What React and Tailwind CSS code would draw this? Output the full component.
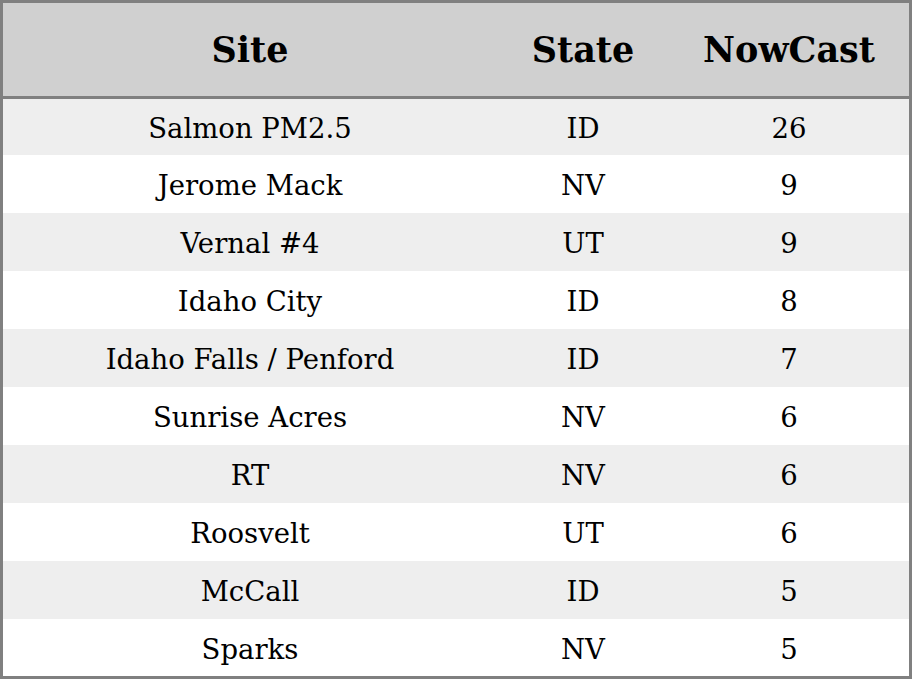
import React from 'react';

const rows = [
  ['Salmon PM2.5', 'ID', '26'],
  ['Jerome Mack', 'NV', '9'],
  ['Vernal #4', 'UT', '9'],
  ['Idaho City', 'ID', '8'],
  ['Idaho Falls / Penford', 'ID', '7'],
  ['Sunrise Acres', 'NV', '6'],
  ['RT', 'NV', '6'],
  ['Roosvelt', 'UT', '6'],
  ['McCall', 'ID', '5'],
  ['Sparks', 'NV', '5'],
];

export default function App() {
  return (
    <div className="w-[912px] h-[679px] overflow-hidden border-[3px] border-[#808080] bg-white text-black font-['DejaVu_Serif',serif]">
      {/* header */}
      <div className="grid grid-cols-[494px_172px_1fr] h-[96px] pt-[2px] bg-[#d0d0d0] border-b-[3px] border-[#808080] text-[35px] font-bold items-center text-center">
        <div>Site</div>
        <div>State</div>
        <div>NowCast</div>
      </div>

      {rows.map(([site, state, now], i) => (
        <div
          key={site}
          className={
            'grid grid-cols-[494px_172px_1fr] items-center text-center text-[27.5px] pt-[3px] ' +
            (i === 0 ? 'h-[56px] ' : 'h-[58px] ') +
            (i % 2 === 0 ? 'bg-[#eeeeee]' : 'bg-white')
          }
        >
          <div>{site}</div>
          <div>{state}</div>
          <div>{now}</div>
        </div>
      ))}
    </div>
  );
}
